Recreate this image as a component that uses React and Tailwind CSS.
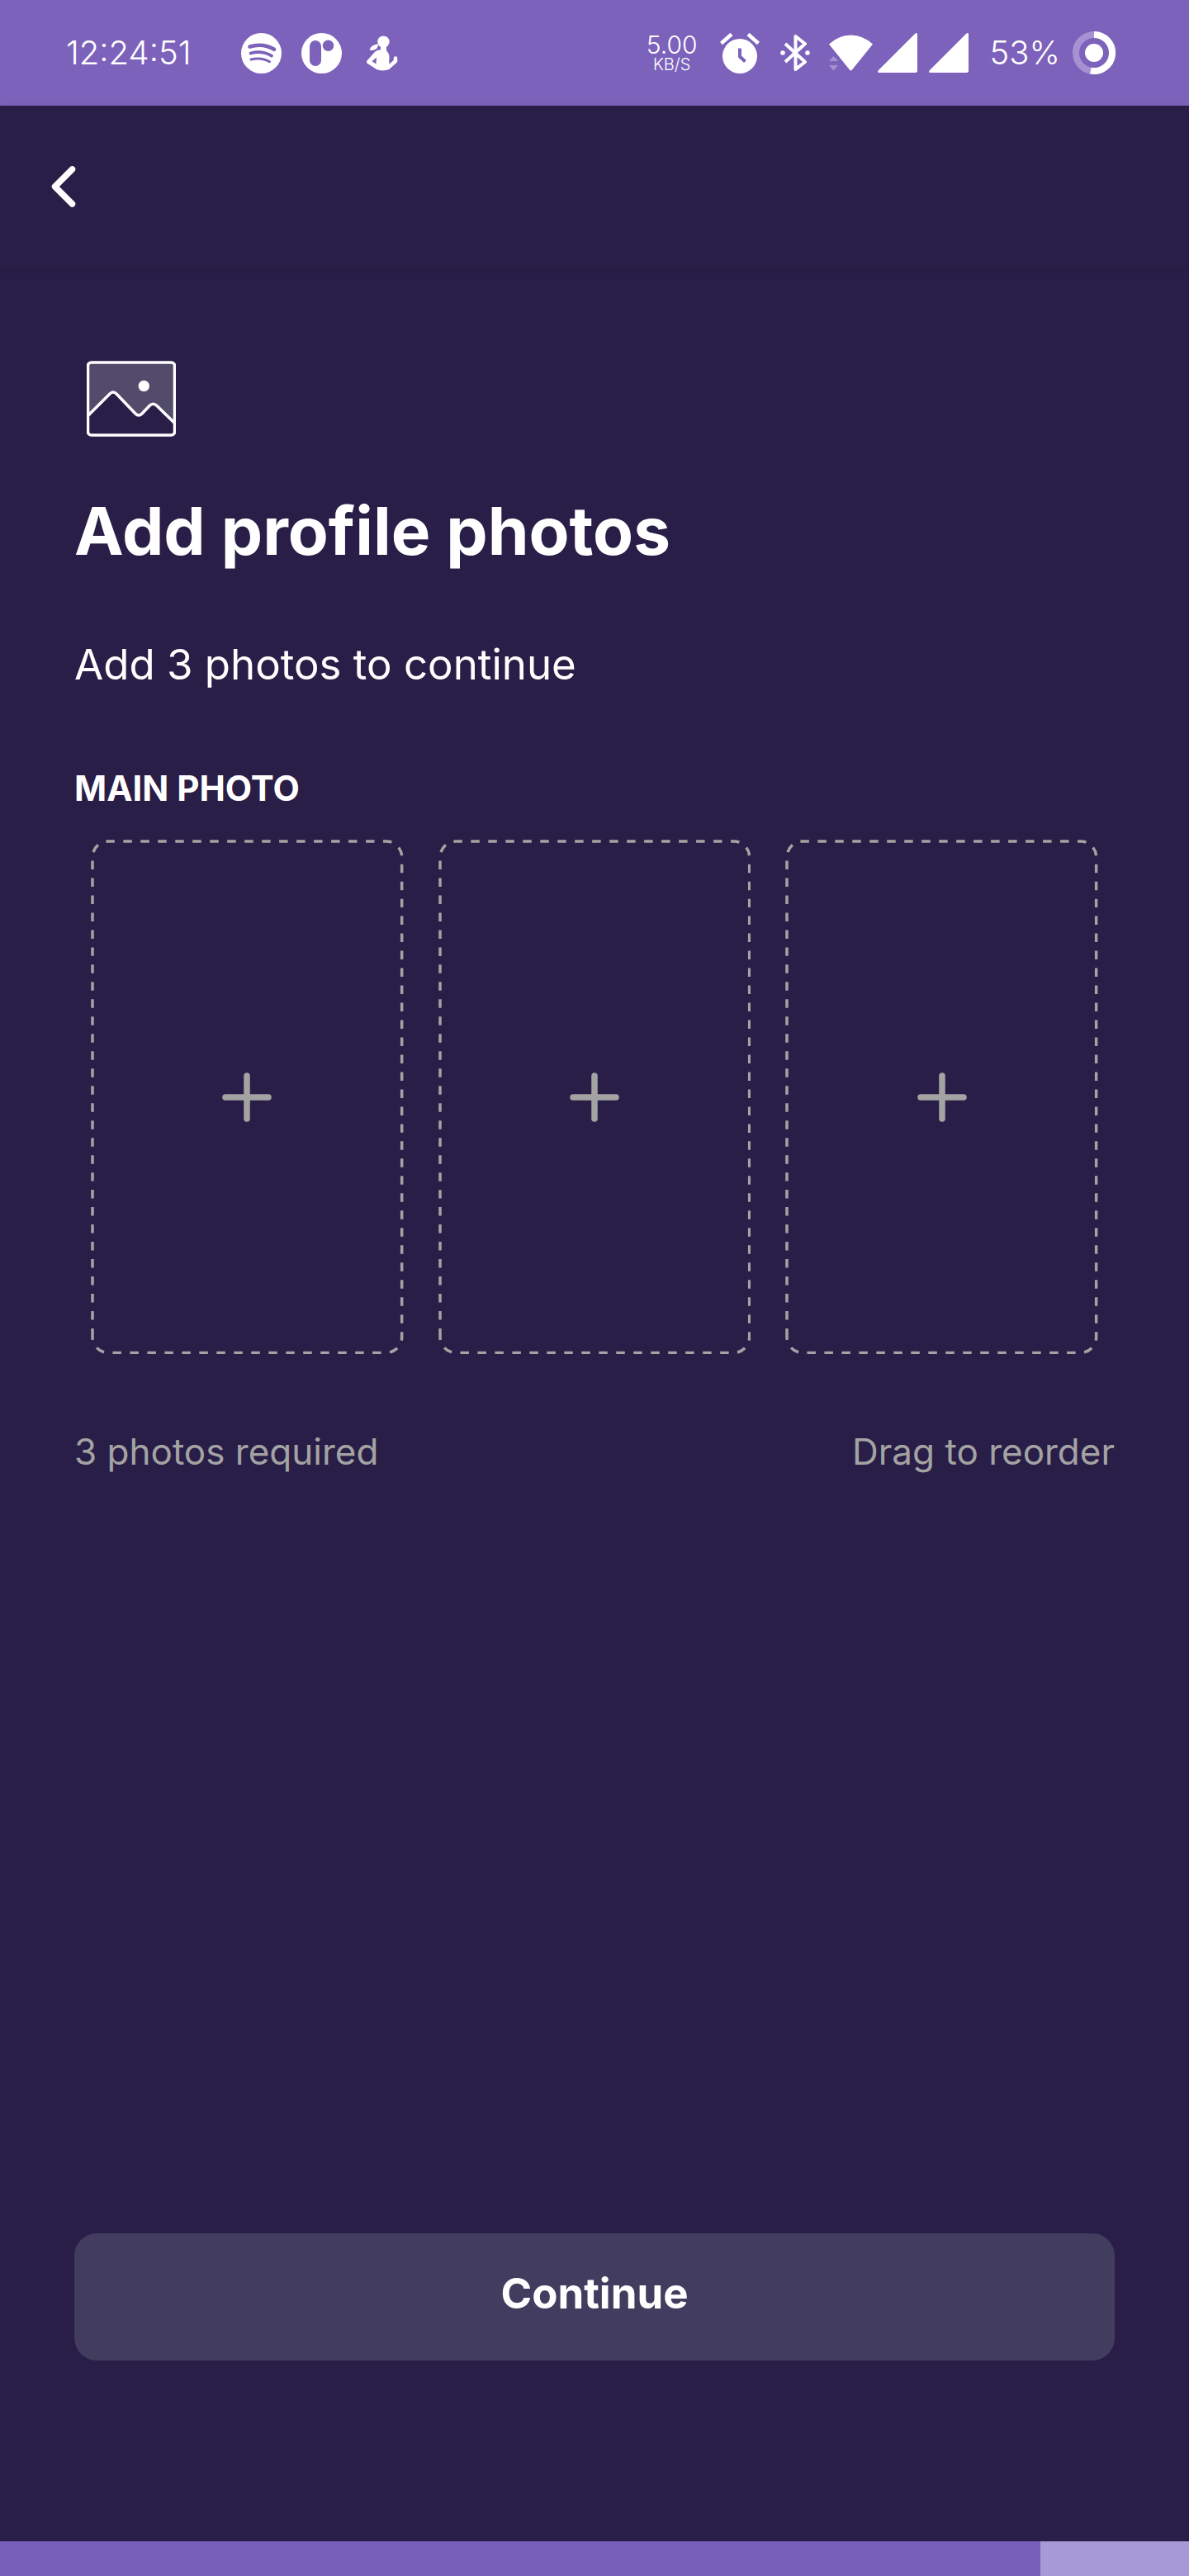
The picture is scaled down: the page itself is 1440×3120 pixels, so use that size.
function SpotifyIcon() {
  return (
    <svg viewBox="0 0 49 49" className="size-[49px]" aria-hidden="true">
      <circle cx="24.5" cy="24.5" r="24.5" fill="#fff" />
      <g fill="none" stroke="#7d62bb" strokeLinecap="round">
        <path d="M10.5 16.5C20 13.600 31 14.400 40 19.800" strokeWidth="4.600" />
        <path d="M11.500 24.500C20 22.200 29.500 23.200 37 27.600" strokeWidth="3.800" />
        <path d="M12 32C19.500 30.200 28 31 34.500 34.700" strokeWidth="3" />
      </g>
    </svg>
  );
}

function PillIcon() {
  return (
    <svg viewBox="0 0 49 49" className="size-[49px]" aria-hidden="true">
      <circle cx="24.5" cy="24.5" r="24.5" fill="#fff" />
      <rect x="10" y="9" width="14" height="31" rx="7" fill="#7d62bb" />
      <circle cx="32.500" cy="15.300" r="6.700" fill="#7d62bb" />
    </svg>
  );
}

function PersonIcon() {
  return (
    <svg viewBox="0 0 49 49" className="size-[49px]" aria-hidden="true">
      <circle cx="26.400" cy="10.600" r="7.200" fill="#fff" />
      <path
        d="M23 14H30V21.500C33 24 34.200 28 33.200 32.500L33.500 43.500Q26 47 18 44L6.500 36.500Q5.300 35.300 6.500 33.500L15 24Q18 20 23 20.500ZM18 29.500L12.500 34.300L17.500 37.500Z"
        fill="#fff"
        fillRule="evenodd"
      />
      <path d="M9.500 20.500C11.500 15.500 15 13.500 20.500 13.500L18.500 18.500C16 20.500 12.500 21.700 9.500 20.500Z" fill="#fff" />
      <path d="M32 42L41 34V30.500" fill="none" stroke="#fff" strokeWidth="4.500" strokeLinecap="round" strokeLinejoin="round" />
    </svg>
  );
}

function AlarmIcon() {
  return (
    <svg viewBox="0 0 50 50" className="h-[50px] w-[50px]" aria-hidden="true">
      <circle cx="25" cy="29" r="21" fill="#fff" />
      <path d="M2.500 13.500L15 2.500M47.500 13.500L35 2.500" stroke="#fff" strokeWidth="4.500" />
      <path d="M25 19.500V29.500L31.500 35.500" fill="none" stroke="#7d62bb" strokeWidth="4" />
    </svg>
  );
}

function BluetoothIcon() {
  return (
    <svg viewBox="0 0 36 44" className="ml-6 h-11 w-9" aria-hidden="true">
      <path d="M6 11L30 33L18.500 42V2L30 11L6 33" fill="none" stroke="#fff" strokeWidth="4" strokeLinejoin="round" />
      <circle cx="3" cy="22" r="2.800" fill="#fff" />
      <circle cx="33" cy="22" r="2.800" fill="#fff" />
    </svg>
  );
}

function WifiIcon() {
  return (
    <svg viewBox="0 0 53 44" className="ml-[23px] h-11 w-[53px]" aria-hidden="true">
      <path d="M0 11.500Q12 0.500 26.500 0.500T53 11.500L28 42.500Q26.500 44.500 25 42.500Z" fill="#fff" />
      <path d="M0 32L5.500 26L11 32ZM0 37L5.500 43.500L11 37Z" fill="#a692d3" />
    </svg>
  );
}

function SignalIcon({ className }) {
  return (
    <svg viewBox="0 0 48 48" className={className} aria-hidden="true">
      <path d="M45 1Q48 -1.500 48 2V45.500Q48 48 45.500 48H2Q-1.500 48 1 45Z" fill="#fff" />
    </svg>
  );
}

function BatteryIcon() {
  return (
    <svg viewBox="0 0 52 52" className="ml-[15px] size-[52px]" aria-hidden="true">
      <circle cx="26" cy="26" r="22" fill="none" stroke="#a692d3" strokeWidth="8" />
      <path d="M26 4A22 22 0 1 1 21.900 47.600" fill="none" stroke="#fff" strokeWidth="8" />
      <circle cx="26" cy="26" r="11" fill="#fff" />
    </svg>
  );
}

function StatusBar() {
  return (
    <div className="flex h-32 items-center justify-between bg-[#7d62bb] pr-[89px] pl-20 text-white">
      <div className="flex items-center gap-6">
        <time className="w-[188px] text-[40px] leading-none font-light">12:24:51</time>
        <SpotifyIcon />
        <PillIcon />
        <PersonIcon />
      </div>
      <div className="flex items-center">
        <div className="mr-[26px] flex flex-col items-center font-light">
          <span className="text-[30px] leading-[28px]">5.00</span>
          <span className="text-[20px] leading-[20px]">KB/S</span>
        </div>
        <AlarmIcon />
        <BluetoothIcon />
        <WifiIcon />
        <SignalIcon className="ml-1.5 size-12" />
        <SignalIcon className="ml-3.5 size-12" />
        <span className="ml-[26px] text-[40px] leading-none font-light">53%</span>
        <BatteryIcon />
      </div>
    </div>
  );
}

function PictureIcon() {
  return (
    <svg viewBox="0 0 108 92" className="ml-[15px] h-[92px] w-[108px]" aria-hidden="true">
      <path
        d="M2 66L28 41Q32 36 37 41L59 64Q63 68 67 64L76 55Q80 50 85 54L106 74V5Q106 2 103 2H5Q2 2 2 5Z"
        fill="#534b6c"
      />
      <rect x="1.500" y="2" width="105" height="88" rx="4" fill="none" stroke="#fff" strokeWidth="3.500" />
      <path
        d="M2 66L28 40Q32 36 36 40L59 64Q63 68 67 64L76 54.500Q80.500 50 85 54.500L106 75"
        fill="none"
        stroke="#fff"
        strokeWidth="3.500"
      />
      <circle cx="69.300" cy="30.500" r="6.700" fill="#fff" />
    </svg>
  );
}

function PhotoSlot({ index }) {
  return (
    <button type="button" aria-label={`Add photo ${index}`} className="grid aspect-[379/624] place-items-center">
      <svg viewBox="0 0 379 624" preserveAspectRatio="none" className="col-start-1 row-start-1 size-full" aria-hidden="true">
        <path
          d="M2 603V21A19 19 0 0 1 21 2H358A19 19 0 0 1 377 21V603A19 19 0 0 1 358 622H21A19 19 0 0 1 2 603"
          fill="none"
          stroke="#a3a3a3"
          strokeWidth="3.500"
          strokeDasharray="10.500 10.500"
        />
      </svg>
      <svg viewBox="0 0 60 60" className="col-start-1 row-start-1 size-[60px]" aria-hidden="true">
        <path d="M30 4V56M4 30H56" stroke="#a3a3a3" strokeWidth="7.500" strokeLinecap="round" />
      </svg>
    </button>
  );
}

export default function App() {
  return (
    <div className="flex min-h-screen flex-col bg-[#291e47] font-[Inter,sans-serif] text-white">
      <StatusBar />
      <header className="flex h-[196px] items-center px-12 shadow-[0_2px_8px_rgba(0,0,0,0.12)]">
        <button type="button" aria-label="Back" className="p-2.5">
          <svg viewBox="0 0 40 60" className="h-[60px] w-10" aria-hidden="true">
            <path d="M29.500 9L8.500 30L29.500 51" fill="none" stroke="#fff" strokeWidth="7.500" strokeLinecap="round" strokeLinejoin="round" />
          </svg>
        </button>
      </header>
      <main className="flex flex-1 flex-col px-[90px] pt-[113px] pb-[219px]">
        <PictureIcon />
        <h1 className="mt-[58px] text-[80px] leading-[112px] font-bold">Add profile photos</h1>
        <p className="mt-[70px] text-[51px] leading-[72px]">Add 3 photos to continue</p>
        <h2 className="mt-[84px] text-[42px] leading-[60px] font-bold">MAIN PHOTO</h2>
        <div className="mt-8 grid grid-cols-3 gap-[42px] px-5">
          <PhotoSlot index={1} />
          <PhotoSlot index={2} />
          <PhotoSlot index={3} />
        </div>
        <div className="mt-[86px] flex justify-between text-[44px] leading-[64px] text-[#a3a3a3]">
          <p>3 photos required</p>
          <p>Drag to reorder</p>
        </div>
        <button
          type="button"
          className="mt-auto flex h-[154px] w-full items-center justify-center rounded-[27px] bg-[#423c5f] pb-2 text-[51px] leading-[72px] font-bold"
        >
          Continue
        </button>
      </main>
      <div role="progressbar" aria-label="Profile setup" aria-valuenow={87.5} className="h-[42px] bg-[#a799d5]">
        <div className="h-full w-7/8 bg-[#7760ba]" />
      </div>
    </div>
  );
}
